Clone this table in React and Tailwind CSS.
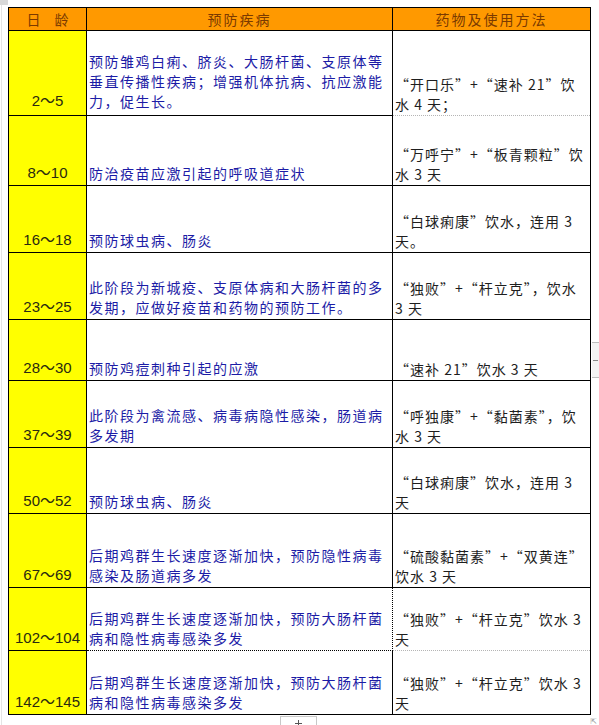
import React from "react";

const rows = [
  { age: "2～5", h: 85, d: ["预防雏鸡白痢、脐炎、大肠杆菌、支原体等", "垂直传播性疾病；增强机体抗病、抗应激能", "力，促生长。"], m: ["“开口乐”+“速补 21”饮", "水 4 天；"], b: "col3dash", up: true },
  { age: "8～10", h: 70, d: ["防治疫苗应激引起的呼吸道症状"], m: ["“万呼宁”+“板青颗粒”饮", "水 3 天"] },
  { age: "16～18", h: 67, d: ["预防球虫病、肠炎"], m: ["“白球痢康”饮水，连用 3", "天。"] },
  { age: "23～25", h: 67, d: ["此阶段为新城疫、支原体病和大肠杆菌的多", "发期，应做好疫苗和药物的预防工作。"], m: ["“独败”+“杆立克”，饮水", "3 天"] },
  { age: "28～30", h: 61, d: ["预防鸡痘刺种引起的应激"], m: ["“速补 21”饮水 3 天"] },
  { age: "37～39", h: 67, d: ["此阶段为禽流感、病毒病隐性感染，肠道病", "多发期"], m: ["“呼独康”+“黏菌素”，饮", "水 3 天"] },
  { age: "50～52", h: 66, d: ["预防球虫病、肠炎"], m: ["“白球痢康”饮水，连用 3", "天"] },
  { age: "67～69", h: 74, d: ["后期鸡群生长速度逐渐加快，预防隐性病毒", "感染及肠道病多发"], m: ["“硫酸黏菌素”+“双黄连”", "饮水 3 天"] },
  { age: "102～104", h: 63, d: ["后期鸡群生长速度逐渐加快，预防大肠杆菌", "病和隐性病毒感染多发"], m: ["“独败”+“杆立克”饮水 3", "天"], b: "alldash" },
  { age: "142～145", h: 63, d: ["后期鸡群生长速度逐渐加快，预防大肠杆菌", "病和隐性病毒感染多发"], m: ["“独败”+“杆立克”饮水 3", "天"], b: "last" },
];

const cjk = { fontFamily: '"Noto Sans CJK SC", sans-serif' };

function Row({ r }) {
  const solid = "border-b border-black";
  const dash = "border-b border-dotted border-[#b5b5b5]";
  const c1 = r.b === "alldash" ? "border-b border-[#f0f040]" : r.b === "last" ? "" : solid;
  const c2 = r.b === "alldash" ? dash : r.b === "last" ? "" : solid;
  const c3 = r.b === "alldash" || r.b === "col3dash" ? dash : r.b === "last" ? "" : solid;
  const pb = r.up ? "pb-[4px]" : "pb-[2px]";
  return (
    <div className="grid grid-cols-[78px_306px_197px]" style={{ height: r.h }}>
      <div className={`flex flex-col justify-end items-center bg-[#ffff00] border-r border-black ${pb} ${c1}`}>
        <div
          className="leading-[20px] text-[15px] text-[#2a2a10] whitespace-nowrap"
          style={{ fontFamily: '"Liberation Sans", "Noto Sans CJK SC", sans-serif' }}
        >
          {r.age}
        </div>
      </div>
      <div className={`flex flex-col justify-end bg-white border-r border-black pl-[2px] ${pb} ${c2}`}>
        {r.d.map((t, i) => (
          <div key={i} className="leading-[20px] text-[14px] tracking-[1.5px] text-[#1c1ca6] whitespace-nowrap" style={cjk}>
            {t}
          </div>
        ))}
      </div>
      <div className={`flex flex-col justify-end bg-white pl-[2px] pb-[1px] ${c3}`}>
        {r.m.map((t, i) => (
          <div key={i} className="leading-[20px] text-[14px] tracking-[1px] text-[#1e1e1e] whitespace-nowrap" style={cjk}>
            {t}
          </div>
        ))}
      </div>
    </div>
  );
}

export default function App() {
  return (
    <div className="relative w-[599px] h-[725px] bg-white overflow-hidden">
      <div className="absolute left-0 top-0 w-[8px] h-[5px] bg-[#d8d8d8]" />
      <div className="absolute left-[1px] top-[5px] w-px h-[720px] bg-[#e4e4e4]" />
      <div className="pt-[7px] pl-[8px]">
        <div className="w-[583px] border border-black">
          <div className="grid grid-cols-[78px_306px_197px] h-[23px] bg-[#ff9900] border-b border-black" style={cjk}>
            <div className="flex items-center justify-center border-r border-black text-[14px] text-[#7a3a00] leading-none">
              <span>日</span>
              <span className="ml-[14px]">龄</span>
            </div>
            <div className="flex items-center justify-center border-r border-black text-[14px] tracking-[2px] text-[#7a3a00] leading-none">
              预防疾病
            </div>
            <div className="flex items-center justify-center text-[14px] tracking-[2px] text-[#7a3a00] leading-none">
              药物及使用方法
            </div>
          </div>
          {rows.map((r, i) => (
            <Row key={i} r={r} />
          ))}
        </div>
        <div className="flex justify-between items-start">
          <div className="ml-[272px] mt-[1px] w-[37px] h-[10px] border-l border-r border-t border-[#c8c8c8] flex justify-center items-start pt-[3px]">
            <svg width="7" height="7" viewBox="0 0 7 7">
              <path d="M3.5 0V7M0 3.5H7" stroke="#555" strokeWidth="1" />
            </svg>
          </div>
          <div className="mr-[2px] mt-[3px] text-[8px] leading-none text-[#999]" style={{ fontFamily: '"DejaVu Sans", sans-serif' }}>⇱</div>
        </div>
      </div>
      <div className="absolute left-[592px] top-[342px] w-[7px] h-[36px] bg-[#f3f3f3] border-t border-b border-[#bdbdbd] flex items-center">
        <div className="w-[5px] h-px bg-[#888] ml-[1px]" />
      </div>
    </div>
  );
}
